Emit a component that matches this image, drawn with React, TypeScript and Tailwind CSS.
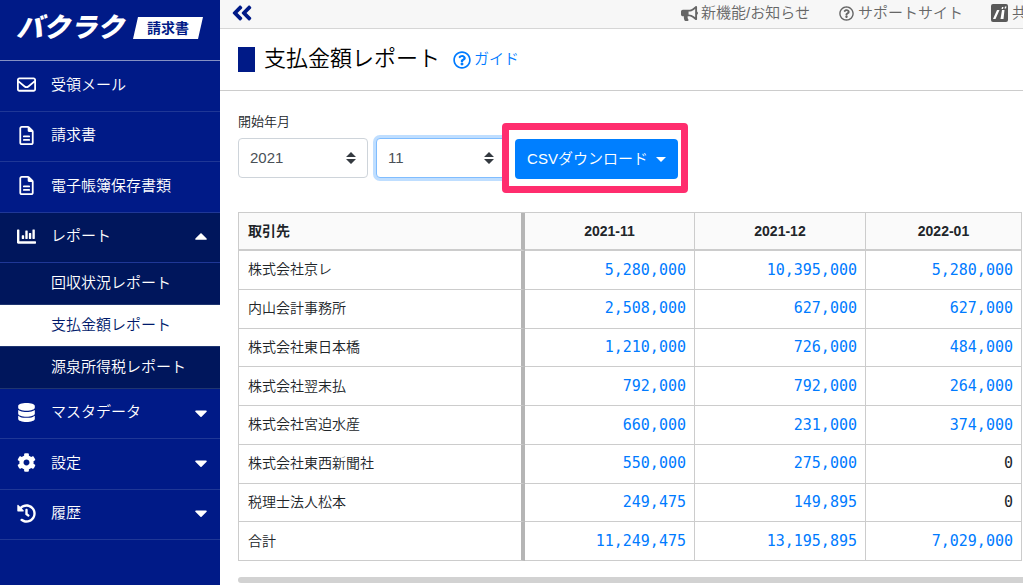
import type { ReactNode } from 'react'
import type { IconType } from 'react-icons'
import {
  FaAngleDoubleLeft,
  FaBullhorn,
  FaCaretDown,
  FaCaretUp,
  FaChartBar,
  FaCog,
  FaHistory,
  FaRegQuestionCircle,
} from 'react-icons/fa'
import { FaDatabase, FaRegEnvelope, FaRegFileLines } from 'react-icons/fa6'
import clsx from 'clsx'

interface NavEntry {
  label: string
  icon: IconType
  caret?: 'up' | 'down'
  active?: boolean
}

const mainNav: NavEntry[] = [
  { label: '受領メール', icon: FaRegEnvelope },
  { label: '請求書', icon: FaRegFileLines },
  { label: '電子帳簿保存書類', icon: FaRegFileLines },
  { label: 'レポート', icon: FaChartBar, caret: 'up', active: true },
]

const reportNav = ['回収状況レポート', '支払金額レポート', '源泉所得税レポート']

const settingsNav: NavEntry[] = [
  { label: 'マスタデータ', icon: FaDatabase, caret: 'down' },
  { label: '設定', icon: FaCog, caret: 'down' },
  { label: '履歴', icon: FaHistory, caret: 'down' },
]

const months = ['2021-11', '2021-12', '2022-01']

const rows = [
  { name: '株式会社京レ', amounts: ['5,280,000', '10,395,000', '5,280,000'] },
  { name: '内山会計事務所', amounts: ['2,508,000', '627,000', '627,000'] },
  { name: '株式会社東日本橋', amounts: ['1,210,000', '726,000', '484,000'] },
  { name: '株式会社翌末払', amounts: ['792,000', '792,000', '264,000'] },
  { name: '株式会社宮迫水産', amounts: ['660,000', '231,000', '374,000'] },
  { name: '株式会社東西新聞社', amounts: ['550,000', '275,000', '0'] },
  { name: '税理士法人松本', amounts: ['249,475', '149,895', '0'] },
  { name: '合計', amounts: ['11,249,475', '13,195,895', '7,029,000'] },
]

function NavItem({ label, icon: Icon, caret, active }: NavEntry) {
  const className = clsx(
    'flex h-full w-full items-center border-b border-[#1f3796] pb-[2px] pl-[17px] pr-[9px] text-left',
    active && 'bg-[#00165c]'
  )
  const content = (
    <>
      <Icon className="mr-[15px] size-[19px] shrink-0" />
      <span className="flex-1">{label}</span>
      {caret === 'up' && <FaCaretUp className="size-5" />}
      {caret === 'down' && <FaCaretDown className="size-5" />}
    </>
  )

  return (
    <li>
      {caret ? (
        <button type="button" aria-expanded={caret === 'up'} className={className}>
          {content}
        </button>
      ) : (
        <a href="#" className={className}>
          {content}
        </a>
      )}
    </li>
  )
}

function Sidebar() {
  return (
    <aside className="w-[220px] shrink-0 bg-[#001a87] text-[15px] font-[350] text-white">
      <a href="#" className="flex h-[61px] items-center border-b border-[#8591c4] pb-1 pl-4">
        <span className="w-[117px] text-[27px] leading-8 font-black italic">バクラク</span>
        <span className="relative flex h-[22px] w-[70px] items-center justify-center">
          <svg viewBox="0 0 70 22" className="absolute inset-0 size-full">
            <path d="M5 0H70L65 22H0Z" fill="#fff" />
          </svg>
          <span className="relative text-[14px] leading-5 font-bold text-[#001a87]">請求書</span>
        </span>
      </a>
      <nav>
        <ul className="grid h-[202px] auto-rows-fr">
          {mainNav.map((item) => (
            <NavItem key={item.label} {...item} />
          ))}
        </ul>
        <ul>
          {reportNav.map((label) => (
            <li key={label}>
              <a
                href="#"
                className={clsx(
                  'flex h-[42px] items-center border-b border-[#1f3570] pl-[51px]',
                  label === '支払金額レポート' ? 'bg-white text-[#001a6b]' : 'bg-[#00165c]'
                )}
              >
                {label}
              </a>
            </li>
          ))}
        </ul>
        <ul className="grid h-[151px] auto-rows-fr">
          {settingsNav.map((item) => (
            <NavItem key={item.label} {...item} />
          ))}
        </ul>
      </nav>
    </aside>
  )
}

function TopBar() {
  return (
    <header className="flex h-[29px] items-center justify-between overflow-hidden border-b border-[#d6d6d6] bg-[#f7f7f7] pb-[2px] pl-[10px]">
      <button type="button" aria-label="メニューを閉じる" className="text-[#001a87]">
        <FaAngleDoubleLeft className="size-6" />
      </button>
      <div className="flex h-6 items-center text-[15px] font-[350] whitespace-nowrap text-[#666]">
        <a href="#" className="mr-[29px] flex items-center">
          <FaBullhorn className="mr-[3px] size-[17px]" />
          新機能/お知らせ
        </a>
        <a href="#" className="mr-7 flex items-center">
          <FaRegQuestionCircle className="mr-1 size-[15px]" />
          サポートサイト
        </a>
        <a href="#" className="flex w-8 items-center">
          <svg viewBox="0 0 17 18" className="mr-1 h-[18px] w-[17px] shrink-0">
            <rect width="17" height="18" rx="2" fill="#5a5a5a" />
            <path d="M6 6H8.5L4.5 15H2ZM11 6H13.5L12.5 15H9.5ZM11 3H12.5L12 5H10.5ZM14 2.5H15.5L15 4.5H13.5Z" fill="#fff" />
          </svg>
          共
        </a>
      </div>
    </header>
  )
}

function MonthSelect({ label, value, focused }: { label: string; value: string; focused?: boolean }) {
  return (
    <div className="relative">
      <select
        aria-label={label}
        defaultValue={value}
        className={clsx(
          'h-10 w-[130px] appearance-none rounded border bg-white pl-[11px] text-[15px] text-[#495057] outline-none',
          focused ? 'border-[#80bdff] ring-3 ring-[#bfdeff]' : 'border-[#ced4da]'
        )}
      >
        <option>{value}</option>
      </select>
      <svg viewBox="0 0 10 12" className="pointer-events-none absolute top-[14px] right-3 h-3 w-[10px]">
        <path d="M5 0L10 5H0ZM0 7H10L5 12Z" fill="#343a40" />
      </svg>
    </div>
  )
}

function Highlight({ children }: { children: ReactNode }) {
  return (
    <div className="relative">
      <div className="absolute -top-4 -right-[10px] -bottom-[14px] -left-[13px] rounded border-[7px] border-[#ff2d6e] bg-white" />
      {children}
    </div>
  )
}

function ReportTable() {
  return (
    <table className="h-[349px] w-full table-fixed border-separate border-spacing-0 border-t border-l border-[#ccc] text-[14px] text-[#212529]">
      <colgroup>
        <col className="w-[286px]" />
        <col className="w-[170px]" />
        <col className="w-[171px]" />
        <col />
      </colgroup>
      <thead>
        <tr className="h-[38px] bg-[#fafafa]">
          <th className="border-r-4 border-b-2 border-r-[#b5b5b5] border-b-[#ccc] px-[9px] text-left">取引先</th>
          {months.map((month) => (
            <th key={month} className="border-r border-b-2 border-[#ccc]">
              {month}
            </th>
          ))}
        </tr>
      </thead>
      <tbody>
        {rows.map((row) => (
          <tr key={row.name}>
            <td className="border-r-4 border-b border-r-[#b5b5b5] border-b-[#ccc] px-[9px] font-[350]">{row.name}</td>
            {row.amounts.map((amount, i) => (
              <td
                key={months[i]}
                className="border-r border-b border-[#ccc] px-2 text-right font-['DejaVu_Sans_Mono',monospace] text-[15px]"
              >
                {amount === '0' ? (
                  amount
                ) : (
                  <a href="#" className="text-[#007bff]">
                    {amount}
                  </a>
                )}
              </td>
            ))}
          </tr>
        ))}
      </tbody>
    </table>
  )
}

export default function App() {
  return (
    <div className="flex h-screen overflow-hidden bg-white font-['Liberation_Sans','Noto_Sans_CJK_JP',sans-serif]">
      <Sidebar />
      <div className="min-w-0 flex-1">
        <TopBar />
        <div className="flex h-[62px] items-center border-b border-[#ccc] pl-[18px]">
          <span className="mr-[9px] h-[25px] w-[17px] bg-[#001a87]" />
          <h1 className="pb-[2px] text-[22px] font-[350] text-black">支払金額レポート</h1>
          <a href="#" className="ml-[13px] flex items-center text-[15px] font-[350] text-[#007bff]">
            <FaRegQuestionCircle className="mr-[3px] size-[18px]" />
            ガイド
          </a>
        </div>
        <main className="pt-[21px] pl-[18px]">
          <p className="mb-[6px] text-[13px] leading-5 font-[350] text-[#212529]">開始年月</p>
          <div className="flex items-start gap-2">
            <MonthSelect label="開始年" value="2021" />
            <MonthSelect label="開始月" value="11" focused />
            <div className="pt-px pl-px">
              <Highlight>
                <button
                  type="button"
                  className="relative flex h-10 w-[163px] items-center justify-center gap-2 rounded bg-[#007fff] text-[15px] font-[350] whitespace-nowrap text-white"
                >
                  CSVダウンロード
                  <svg viewBox="0 0 10 5" className="h-[5px] w-[10px]">
                    <path d="M0 0H10L5 5Z" fill="currentColor" />
                  </svg>
                </button>
              </Highlight>
            </div>
          </div>
          <div className="mt-[33px] pr-px">
            <ReportTable />
          </div>
          <div className="mt-4 h-[6px] rounded-l-full bg-[#d2d2d2]" />
        </main>
      </div>
    </div>
  )
}
